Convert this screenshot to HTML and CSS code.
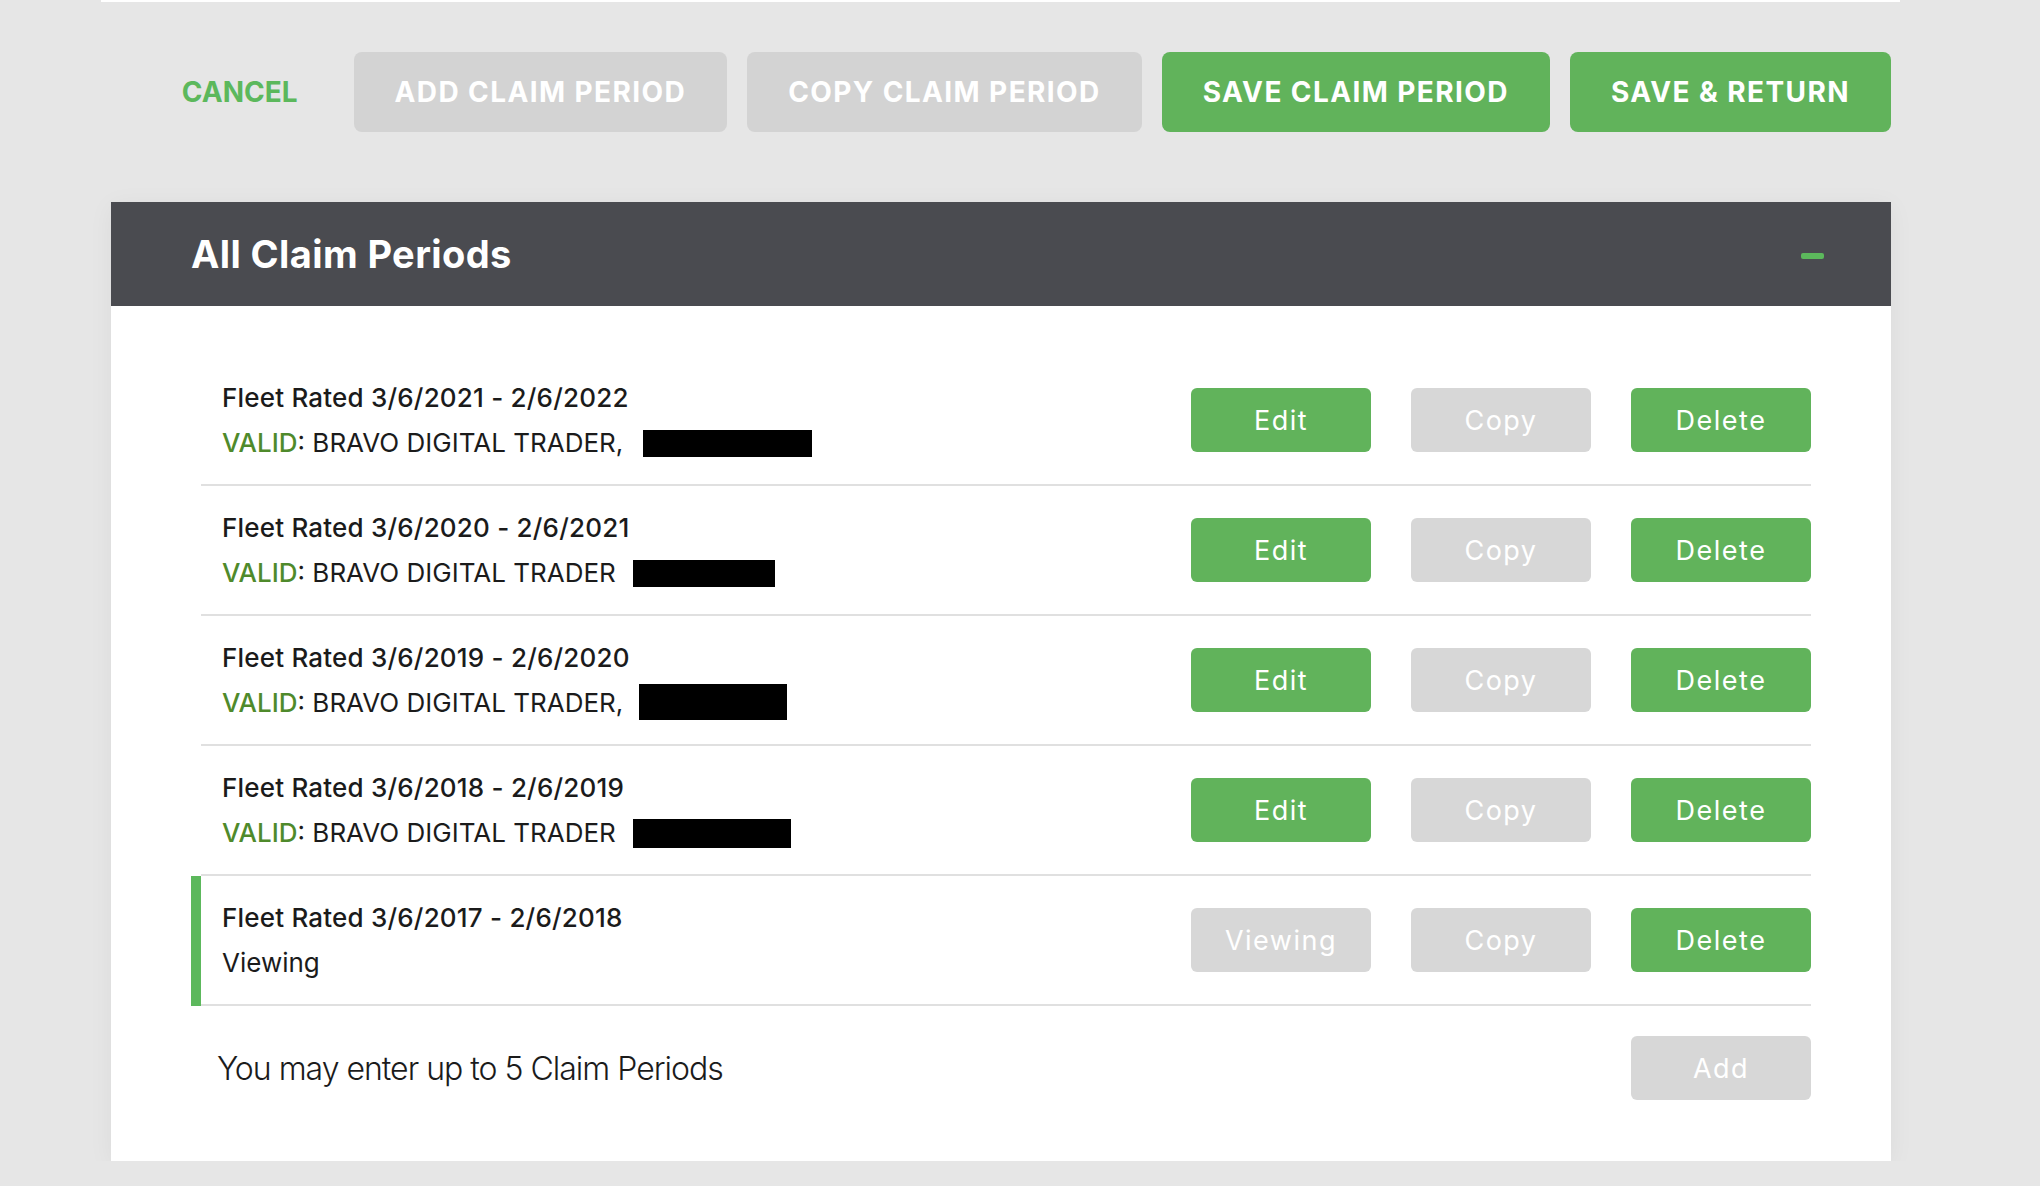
FILE: index.html
```html
<!DOCTYPE html>
<html lang="en">
<head>
    <meta charset="UTF-8">
    <meta name="viewport" content="width=device-width, initial-scale=1.0">
    <title>All Claim Periods</title>
    <link rel="stylesheet" href="styles.css">
</head>
<body>
    <div class="topbar"></div>

    <main class="page">
        <!-- Thanh hành động -->
        <div class="actions">
            <button class="btn-link">Cancel</button>
            <button class="btn btn-off">Add Claim Period</button>
            <button class="btn btn-off">Copy Claim Period</button>
            <button class="btn btn-on">Save Claim Period</button>
            <button class="btn btn-on">Save &amp; Return</button>
        </div>

        <section class="panel">
            <div class="panel-header">
                <h2>All Claim Periods</h2>
                <span class="collapse"></span>
            </div>

            <div class="panel-body">
                <ul class="periods">
                    <li class="period">
                        <div class="period-info">
                            <div class="period-title">Fleet Rated 3/6/2021 - 2/6/2022</div>
                            <div class="period-status"><span class="valid">VALID</span>: BRAVO DIGITAL TRADER, <span class="redact redact-1"></span></div>
                        </div>
                        <div class="period-actions">
                            <button class="row-btn row-on">Edit</button>
                            <button class="row-btn row-off">Copy</button>
                            <button class="row-btn row-on">Delete</button>
                        </div>
                    </li>
                    <li class="period">
                        <div class="period-info">
                            <div class="period-title">Fleet Rated 3/6/2020 - 2/6/2021</div>
                            <div class="period-status"><span class="valid">VALID</span>: BRAVO DIGITAL TRADER <span class="redact redact-2"></span></div>
                        </div>
                        <div class="period-actions">
                            <button class="row-btn row-on">Edit</button>
                            <button class="row-btn row-off">Copy</button>
                            <button class="row-btn row-on">Delete</button>
                        </div>
                    </li>
                    <li class="period">
                        <div class="period-info">
                            <div class="period-title">Fleet Rated 3/6/2019 - 2/6/2020</div>
                            <div class="period-status"><span class="valid">VALID</span>: BRAVO DIGITAL TRADER, <span class="redact redact-3"></span></div>
                        </div>
                        <div class="period-actions">
                            <button class="row-btn row-on">Edit</button>
                            <button class="row-btn row-off">Copy</button>
                            <button class="row-btn row-on">Delete</button>
                        </div>
                    </li>
                    <li class="period">
                        <div class="period-info">
                            <div class="period-title">Fleet Rated 3/6/2018 - 2/6/2019</div>
                            <div class="period-status"><span class="valid">VALID</span>: BRAVO DIGITAL TRADER <span class="redact redact-4"></span></div>
                        </div>
                        <div class="period-actions">
                            <button class="row-btn row-on">Edit</button>
                            <button class="row-btn row-off">Copy</button>
                            <button class="row-btn row-on">Delete</button>
                        </div>
                    </li>
                    <li class="period period-current">
                        <div class="period-info">
                            <div class="period-title">Fleet Rated 3/6/2017 - 2/6/2018</div>
                            <div class="period-status">Viewing</div>
                        </div>
                        <div class="period-actions">
                            <button class="row-btn row-off">Viewing</button>
                            <button class="row-btn row-off">Copy</button>
                            <button class="row-btn row-on">Delete</button>
                        </div>
                    </li>
                </ul>

                <div class="periods-footer">
                    <p>You may enter up to 5 Claim Periods</p>
                    <button class="row-btn row-off">Add</button>
                </div>
            </div>
        </section>
    </main>
</body>
</html>
```

FILE: styles.css
```css
/* Reset */
* {
    margin: 0;
    padding: 0;
    box-sizing: border-box;
}

body {
    font-family: Inter, "Noto Sans", sans-serif;
    background-color: #e6e6e6;
    color: #1b1b1b;
}

button {
    font-family: inherit;
    border: none;
    cursor: pointer;
}

/* Thanh trắng phía trên */
.topbar {
    height: 2px;
    width: 1799px;
    margin-left: 101px;
    background-color: #fff;
    box-shadow: 0 6px 24px rgba(0, 0, 0, 0.04);
}

.page {
    width: 1780px;
    margin-left: 111px;
}

/* Thanh hành động */
.actions {
    display: flex;
    justify-content: flex-end;
    gap: 20px;
    margin-top: 50px;
}

.btn-link,
.btn {
    height: 80px;
    font-size: 28px;
    font-weight: 700;
    text-transform: uppercase;
}

.btn-link {
    padding: 0 36px;
    background: none;
    color: #5cb85c;
}

.btn {
    padding: 0 41px;
    border-radius: 8px;
    letter-spacing: 1.4px;
    color: #fff;
}

.btn-off {
    background-color: #d3d3d3;
}

.btn-on {
    background-color: #61b35b;
}

/* Khung danh sách */
.panel {
    margin-top: 70px;
    background-color: #fff;
    box-shadow: 0 4px 24px rgba(0, 0, 0, 0.05);
}

.panel-header {
    display: flex;
    align-items: center;
    justify-content: space-between;
    height: 104px;
    padding: 0 67px 0 80px;
    background-color: #4a4b50;
    color: #fff;
}

.panel-header h2 {
    font-size: 38px;
    font-weight: 700;
    letter-spacing: 0.4px;
}

.collapse {
    width: 23px;
    height: 6px;
    border-radius: 2px;
    background-color: #5cb85c;
    margin-top: 4px;
}

.panel-body {
    padding: 50px 80px 0 90px;
}

.periods {
    list-style: none;
}

.period {
    display: flex;
    align-items: center;
    justify-content: space-between;
    height: 130px;
    padding-left: 21px;
    border-bottom: 2px solid #e0e0e0;
}

.period-current {
    box-shadow: -10px 0 0 #5cb85c;
}

.period-info {
    font-size: 26px;
    line-height: 45px;
}

.period-title {
    font-weight: 500;
    letter-spacing: 0.2px;
}

.valid {
    color: #4f8a2b;
    font-weight: 500;
}

.redact {
    display: inline-block;
    height: 27px;
    margin-left: 10px;
    vertical-align: -5px;
    background-color: #000;
}

.redact-1 { width: 169px; margin-left: 12px; }
.redact-2 { width: 142px; }
.redact-3 { width: 148px; height: 36px; margin-left: 8px; vertical-align: -8px; }
.redact-4 { width: 158px; height: 29px; vertical-align: -6px; }

.period-actions {
    display: flex;
    gap: 40px;
}

.row-btn {
    width: 180px;
    height: 64px;
    border-radius: 6px;
    font-size: 27px;
    letter-spacing: 1.5px;
    color: #fff;
}

.row-on {
    background-color: #61b35b;
}

.row-off {
    background-color: #d7d7d7;
}

/* Chân danh sách */
.periods-footer {
    display: flex;
    align-items: center;
    justify-content: space-between;
    padding: 30px 0 61px 16px;
}

.periods-footer p {
    font-size: 32px;
    font-weight: 300;
    letter-spacing: -1px;
}
```
